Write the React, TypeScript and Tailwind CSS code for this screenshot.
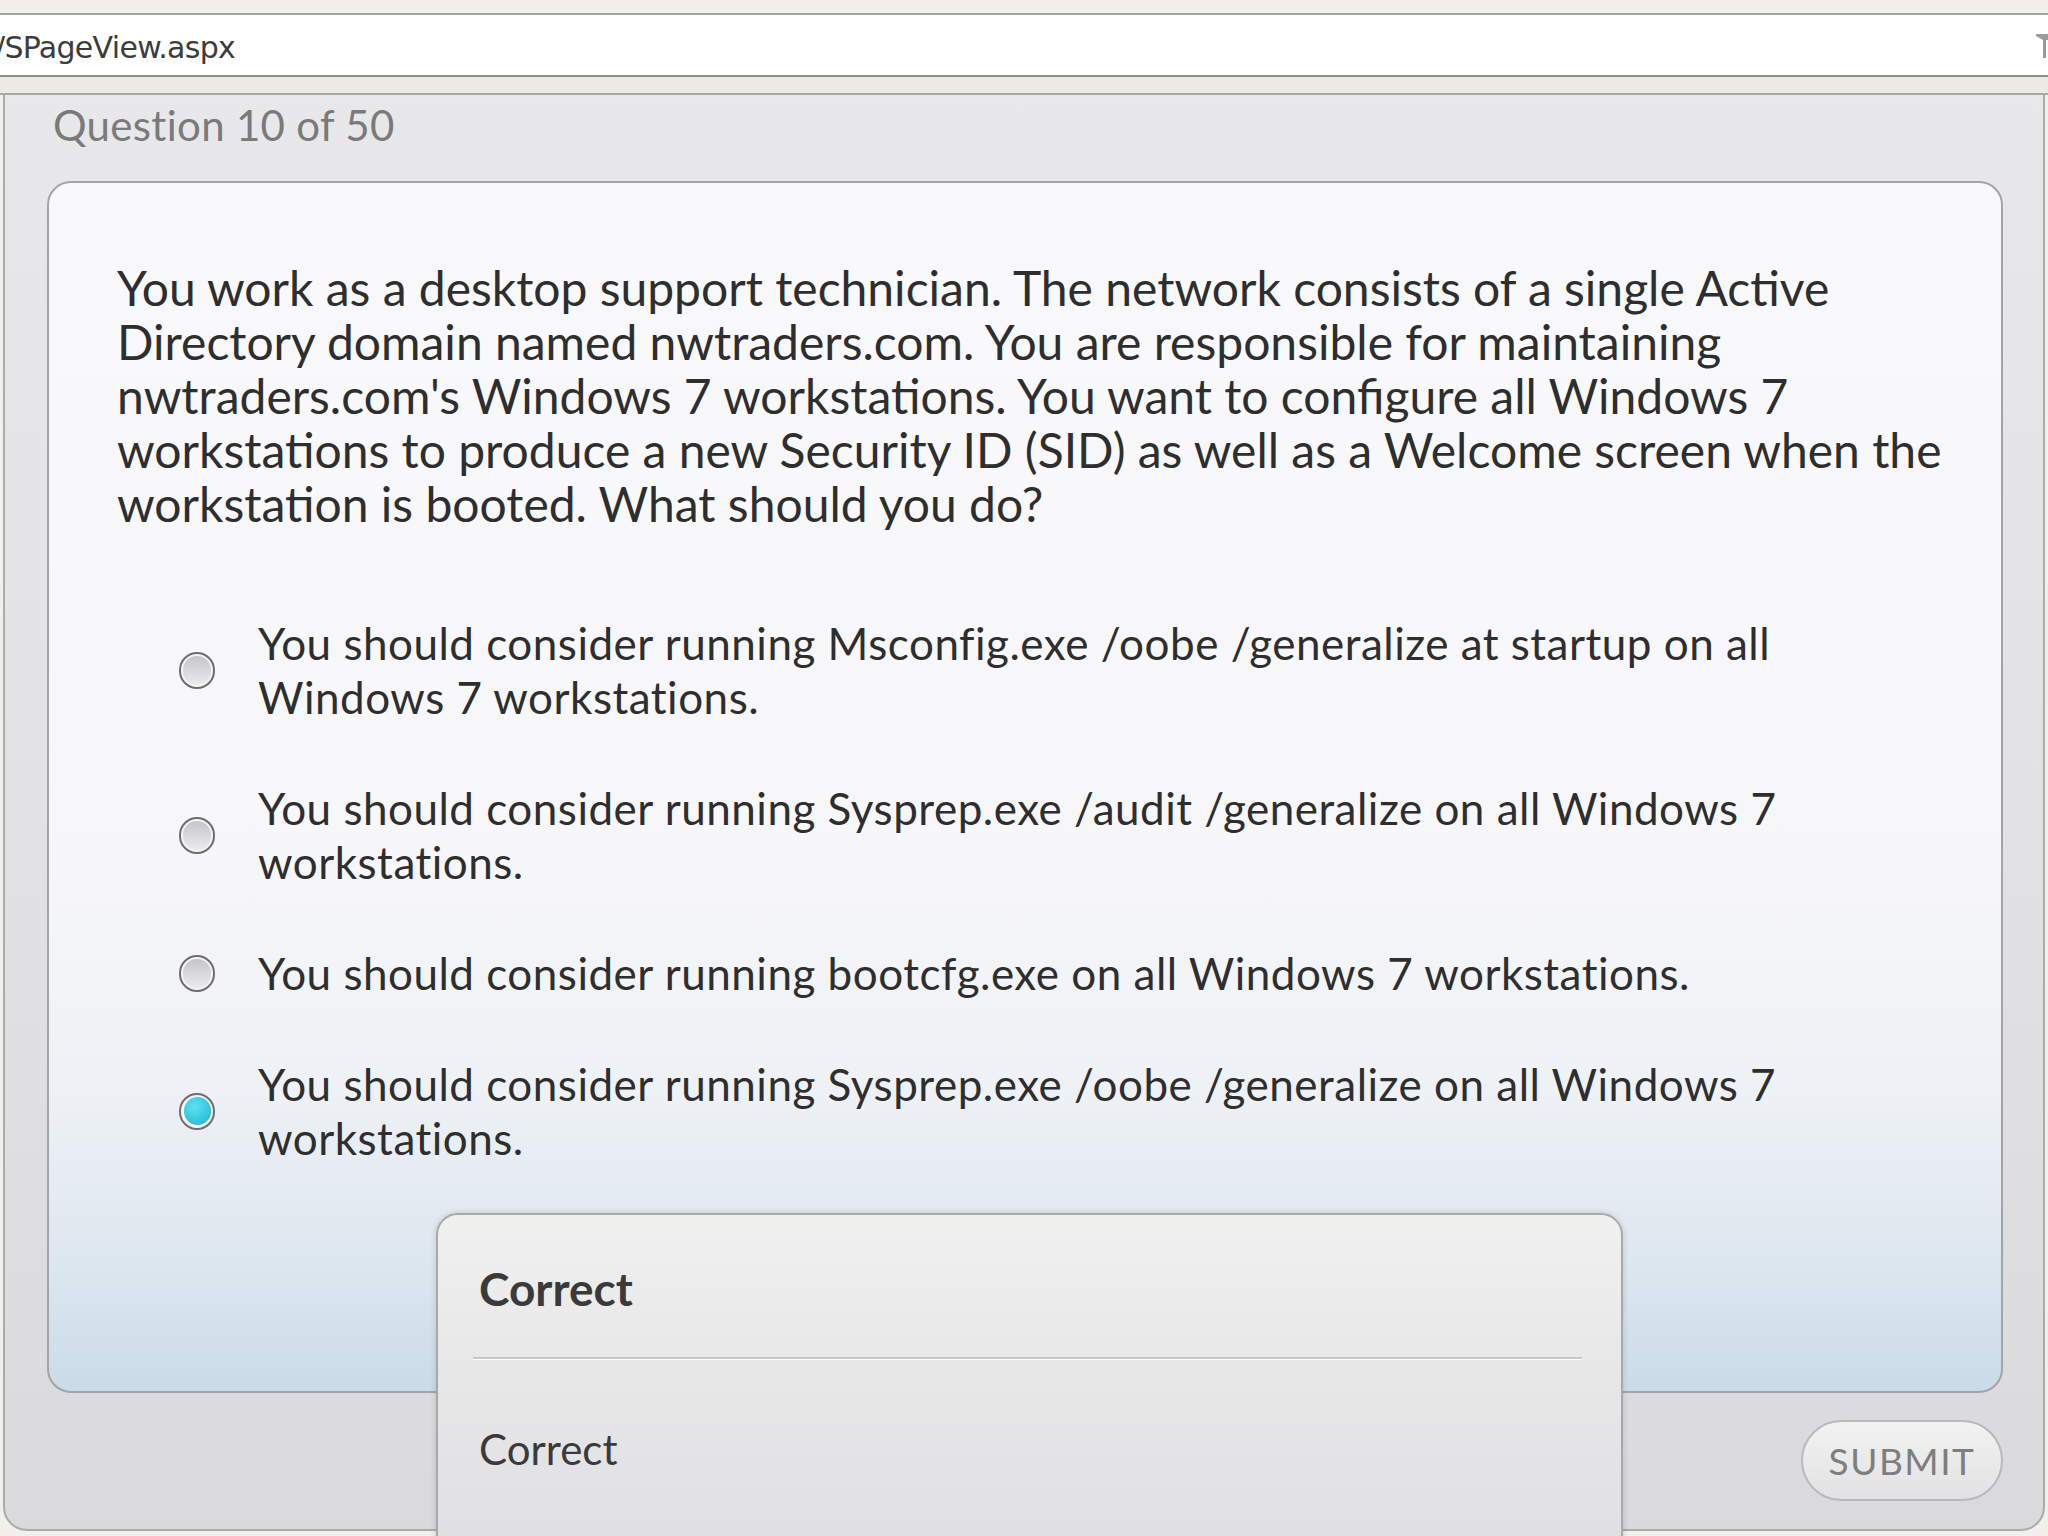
import React from "react";

const question = [
  "You work as a desktop support technician. The network consists of a single Active",
  "Directory domain named nwtraders.com. You are responsible for maintaining",
  "nwtraders.com's Windows 7 workstations. You want to configure all Windows 7",
  "workstations to produce a new Security ID (SID) as well as a Welcome screen when the",
  "workstation is booted. What should you do?",
];

const options = [
  { lines: ["You should consider running Msconfig.exe /oobe /generalize at startup on all", "Windows 7 workstations."], checked: false },
  { lines: ["You should consider running Sysprep.exe /audit /generalize on all Windows 7", "workstations."], checked: false },
  { lines: ["You should consider running bootcfg.exe on all Windows 7 workstations."], checked: false },
  { lines: ["You should consider running Sysprep.exe /oobe /generalize on all Windows 7", "workstations."], checked: true },
];

// Radio bullet, drawn with css
const Radio = ({ checked }: { checked: boolean }) => (
  <div className="w-[36px] h-[37px] shrink-0 rounded-full border-2 border-[#6e6e70] bg-[#f4f4f4] flex items-center justify-center">
    <div
      className={
        checked
          ? "w-[27px] h-[28px] rounded-full bg-[radial-gradient(circle_at_40%_35%,#5fe0f0,#17b6d0)]"
          : "w-[28px] h-[29px] rounded-full bg-[linear-gradient(to_bottom,#c6c6c8,#ebebed)]"
      }
    />
  </div>
);

export default function App() {
  return (
    <div className="relative w-[2048px] h-[1536px] overflow-hidden bg-[#f1f0ea] flex flex-col font-['Lato',sans-serif]">
      {/* browser bits */}
      <div className="h-[13px] shrink-0 bg-[#f1f0ea]" />
      <div className="h-[64px] shrink-0 bg-white border-t-2 border-b-2 border-t-[#a3a3a3] border-b-[#8d8d8d] flex items-center justify-between pt-[5px]">
        <span className="-ml-[5px] text-[30px] text-[#3c3c3c] font-['DejaVu_Sans',sans-serif] tracking-[-0.7px]">/SPageView.aspx</span>
        <svg width="18" height="30" viewBox="0 0 18 30" className="mr-[-4px] -mt-[5px]">
          <path d="M2 4 L18 4 L18 10 L12 10 L12 28 L9 28 L9 10 L2 6 Z" fill="#9b9b9b" />
        </svg>
      </div>
      <div className="h-[18px] shrink-0 bg-[#ecebe3] border-b-2 border-[#a7a7a7]" />

      {/* quiz panel */}
      <div className="mx-[3px] h-[1436px] shrink-0 border-l-2 border-r-2 border-b-2 border-[#ababab] rounded-b-[24px] bg-[linear-gradient(to_bottom,#e8e8ea,#e2e2e4_50%,#dadadc)] flex flex-col">
        <div className="pl-[48px] pt-[8px] h-[52px] text-[42px] leading-[44px] text-[#7a7a7a] tracking-[0.3px]">Question 10 of 50</div>

        <div className="mt-[34px] ml-[42px] mr-[40px] h-[1212px] rounded-[24px] border-2 border-[#a2a4a8] bg-[linear-gradient(to_bottom,#f9f9fb_0%,#f7f7f9_55%,#eef1f5_75%,#dfe8f0_88%,#cadbe9_100%)] pt-[78px] pl-[68px]">
          <div className="text-[48px] leading-[54px] text-[#2e2e2e]">
            {question.map((l) => (
              <div key={l} className="whitespace-nowrap">{l}</div>
            ))}
          </div>

          <div className="mt-[85px] pl-[62px] flex flex-col gap-[57px]">
            {options.map((o, i) => (
              <div key={i} className="flex items-center gap-[43px]">
                <Radio checked={o.checked} />
                <div className="text-[44px] leading-[54px] text-[#2e2e2e] tracking-[0.5px]">
                  {o.lines.map((l) => (
                    <div key={l} className="whitespace-nowrap">{l}</div>
                  ))}
                </div>
              </div>
            ))}
          </div>
        </div>

        <div className="mt-[27px] mr-[40px] flex justify-end">
          <button className="w-[202px] h-[81px] rounded-full border-2 border-[#b9b9bb] bg-[linear-gradient(to_bottom,#f2f2f2,#e2e2e4)] text-[37px] tracking-[1.5px] text-[#7e7e7e]">
            SUBMIT
          </button>
        </div>
      </div>

      {/* feedback popup */}
      <div className="absolute left-[436px] top-[1213px] w-[1187px] h-[400px] rounded-t-[22px] border-2 border-[#a9a9ab] bg-[linear-gradient(to_bottom,#f0f0ef,#e4e3e5_60%,#dddcde)] shadow-[0_0_6px_rgba(0,0,0,0.15)] pt-[46px]">
        <div className="pl-[41px] text-[46px] leading-[56px] font-bold text-[#3a3a3a]">Correct</div>
        <div className="mt-[40px] ml-[35px] mr-[39px] h-[3px] border-t-2 border-[#c6c6c6] border-b border-b-white" />
        <div className="mt-[64px] pl-[41px] text-[42px] leading-[50px] text-[#3a3a3a]">Correct</div>
      </div>
    </div>
  );
}
